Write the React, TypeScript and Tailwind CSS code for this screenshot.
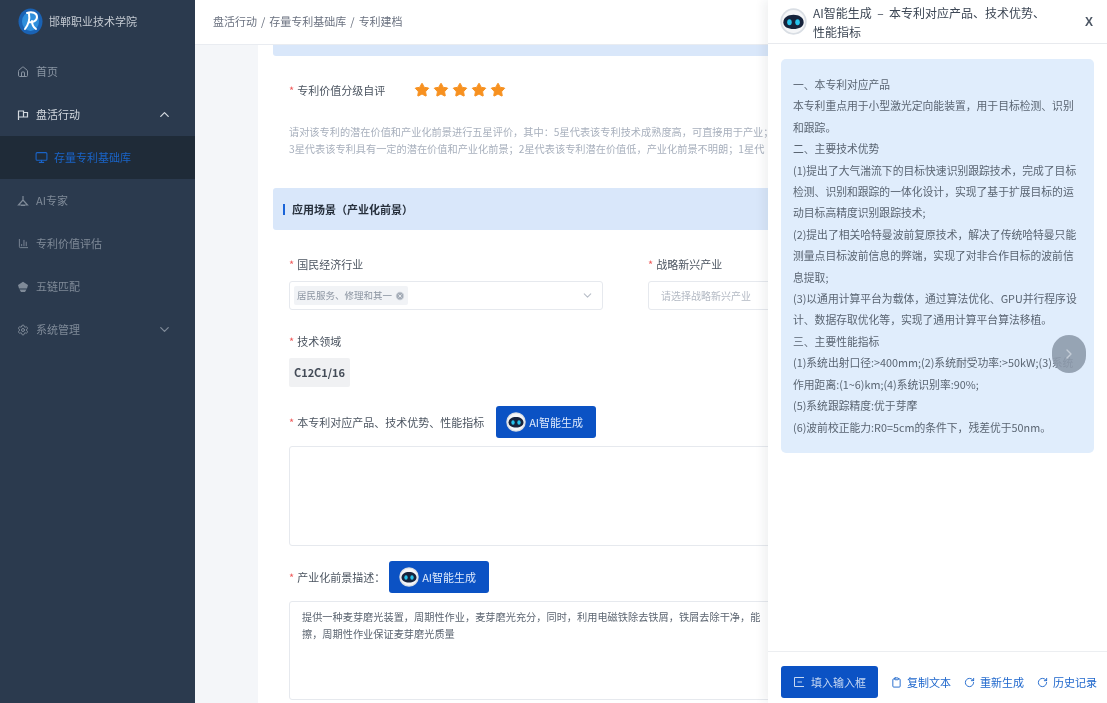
import React from "react";
import { House, ChevronUp, ChevronDown, Monitor, ChartColumn, Settings, RotateCw, Clipboard, ChevronRight, CircleX, Star } from "lucide-react";

const wide = (s: string) => s.replace(/,/g, "\uFF0C").replace(/;/g, "\uFF1B").replace(/:/g, "\uFF1A");
const wideComma = (s: string) => s.replace(/,/g, "\uFF0C");

function Robot({ size }: { size: number }) {
  return (
    <svg width={size} height={size} viewBox="0 0 40 40" className="shrink-0">
      <circle cx="20" cy="20" r="19.5" fill="#d9dee4" />
      <circle cx="20" cy="20" r="17" fill="#f5f6f8" />
      <path d="M5 21c0-7 7-11 15-11s15 4 15 11-7 10-15 10S5 28 5 21z" fill="#16233c" />
      <ellipse cx="14" cy="21" rx="3.400" ry="4.500" fill="#27c3ec" />
      <ellipse cx="26" cy="21" rx="3.400" ry="4.500" fill="#27c3ec" />
    </svg>
  );
}

function Logo() {
  return (
    <svg width="25" height="27" viewBox="0 0 25 27" className="shrink-0">
      <ellipse cx="12.5" cy="13.5" rx="12" ry="13" fill="#1a62b4" />
      <ellipse cx="12.5" cy="13.5" rx="8.500" ry="9.500" fill="#2f8fdc" />
      <path d="M9 5c5-2 10 0 10 4s-5 6-8 5M11 6c1 5-1 11-4 15M14 13c0 3 1 6 4 8" fill="none" stroke="#fff" strokeWidth="2" strokeLinecap="round" />
    </svg>
  );
}

function NavRow({ icon, label, tone, chevron }: { icon: React.ReactNode; label: string; tone: string; chevron?: React.ReactNode }) {
  return (
    <div className={`flex h-[43px] items-center pl-[17px] pr-[23px] text-[11px] ${tone}`}>
      <span className="mr-[7px] flex w-[12px] justify-center">{icon}</span>
      <span className="flex-1">{label}</span>
      {chevron}
    </div>
  );
}

function Req({ children }: { children: React.ReactNode }) {
  return (
    <span className="text-[11px] leading-[16px] text-[#4c5561]">
      <span className="mr-[3px] text-[#ef5b5b]">*</span>
      {children}
    </span>
  );
}

function AiButton() {
  return (
    <div className="flex h-[32px] w-[100px] items-center justify-center gap-[3px] rounded-[3px] bg-[#0b52c4] pr-[3px] text-[11px] text-[#dce8fb]">
      <Robot size={20} />
      <span>AI智能生成</span>
    </div>
  );
}

const panel = [
  "一、本专利对应产品",
  "本专利重点用于小型激光定向能装置,用于目标检测、识别",
  "和跟踪。",
  "二、主要技术优势",
  "(1)提出了大气湍流下的目标快速识别跟踪技术,完成了目标",
  "检测、识别和跟踪的一体化设计,实现了基于扩展目标的运",
  "动目标高精度识别跟踪技术;",
  "(2)提出了相关哈特曼波前复原技术,解决了传统哈特曼只能",
  "测量点目标波前信息的弊端,实现了对非合作目标的波前信",
  "息提取;",
  "(3)以通用计算平台为载体,通过算法优化、GPU并行程序设",
  "计、数据存取优化等,实现了通用计算平台算法移植。",
  "三、主要性能指标",
  "(1)系统出射口径:>400mm;(2)系统耐受功率:>50kW;(3)系统",
  "作用距离:(1~6)km;(4)系统识别率:90%;",
  "(5)系统跟踪精度:优于芽摩",
  "(6)波前校正能力:R0=5cm的条件下,残差优于50nm。",
];

export default function App() {
  return (
    <div className="relative flex h-[703px] w-[1107px] overflow-hidden bg-white blur-[0.7px] font-['Noto_Sans_CJK_SC',sans-serif]">
      <aside className="flex w-[195px] shrink-0 flex-col bg-[#2b3a4e]">
        <div className="flex h-[43px] items-center gap-[6px] pl-[18px] text-[11px] text-[#c3c9d1]">
          <Logo />
          <span>邯郸职业技术学院</span>
        </div>
        <div className="h-[7px]" />
        <NavRow icon={<House size={12} />} label="首页" tone="text-[#8a95a3]" />
        <NavRow
          icon={
            <svg width="12" height="12" viewBox="0 0 12 12" fill="none" stroke="currentColor" strokeWidth="1.200">
              <path d="M1.500 11V2h5v6h-5M6.500 3.500h4v4.500h-4" />
            </svg>
          }
          label="盘活行动"
          tone="text-[#d4d9df]"
          chevron={<ChevronUp size={15} />}
        />
        <div className="flex h-[43px] items-center bg-[#1f2b38] pl-[35px] text-[11px] text-[#1a64c8]">
          <Monitor size={13} className="mr-[6px]" />
          <span>存量专利基础库</span>
        </div>
        <NavRow
          icon={
            <svg width="12" height="12" viewBox="0 0 12 12" fill="none" stroke="currentColor" strokeWidth="1.200">
              <path d="M6 1v4L1.500 10h9L6 5M4 10.500h4" />
            </svg>
          }
          label="AI专家"
          tone="text-[#7f8a98]"
        />
        <NavRow icon={<ChartColumn size={11} />} label="专利价值评估" tone="text-[#7f8a98]" />
        <NavRow
          icon={
            <svg width="12" height="12" viewBox="0 0 12 12" fill="currentColor">
              <path d="M6 .8 11 4l-1 3.500H2L1 4zM2.500 8.500h7L8 11H4z" />
            </svg>
          }
          label="五链匹配"
          tone="text-[#7f8a98]"
        />
        <NavRow icon={<Settings size={12} />} label="系统管理" tone="text-[#7f8a98]" chevron={<ChevronDown size={15} />} />
      </aside>

      <main className="flex min-w-0 flex-1 flex-col">
        <header className="flex h-[45px] shrink-0 items-center gap-[4px] border-b border-[#e9ecf1] bg-white pb-[2px] pl-[18px] text-[11px] text-[#6b7280]">
          <span>盘活行动</span>
          <span>/</span>
          <span>存量专利基础库</span>
          <span>/</span>
          <span>专利建档</span>
        </header>
        <div className="mr-[339px] flex min-h-0 flex-1 overflow-hidden bg-[#f4f6f9] pl-[63px]">
          <div className="w-[860px] shrink-0 bg-white px-[15px]">
            <div className="h-[11px] rounded-b-[3px] bg-[#d9e7fa]" />
            <div className="pl-[16px]">
              <div className="mt-[25px] flex h-[18px] items-center">
                <div className="flex w-[125px]">
                  <Req>专利价值分级自评</Req>
                </div>
                <div className="flex gap-[3px]">
                  {[0, 1, 2, 3, 4].map((i) => (
                    <Star key={i} size={16} fill="#f79120" stroke="#f79120" strokeWidth={1.500} />
                  ))}
                </div>
              </div>
              <div className="mt-[24px] whitespace-nowrap text-[10.200px] leading-[17px] text-[#a8b0bd]">
                <div>{wide("请对该专利的潜在价值和产业化前景进行五星评价,其中:5星代表该专利技术成熟度高,可直接用于产业;")}</div>
                <div>{wide("3星代表该专利具有一定的潜在价值和产业化前景;2星代表该专利潜在价值低,产业化前景不明朗;1星代")}</div>
              </div>
            </div>
            <div className="mt-[31px] flex h-[42px] items-center rounded-[3px] bg-[#d9e7fa] pl-[10px]">
              <span className="mr-[7px] h-[11px] w-[2px] bg-[#1a64d8]" />
              <span className="text-[11px] font-bold text-[#27303c]">{"应用场景\uFF08产业化前景\uFF09"}</span>
            </div>
            <div className="pl-[16px]">
              <div className="mt-[20px] flex gap-[45px]">
                <div className="w-[314px]">
                  <Req>国民经济行业</Req>
                  <div className="mt-[7px] flex h-[29px] items-center justify-between rounded-[3px] border border-[#e6e9ee] pl-[4px] pr-[8px]">
                    <span className="flex h-[19px] items-center gap-[3px] rounded-[2px] bg-[#f1f3f6] px-[3px] text-[9.500px] text-[#8c95a2]">
                      居民服务、修理和其一
                      <CircleX size={10} fill="#a4acb7" stroke="#f1f3f6" />
                    </span>
                    <ChevronDown size={13} className="text-[#b8bec8]" />
                  </div>
                </div>
                <div className="w-[314px]">
                  <Req>战略新兴产业</Req>
                  <div className="mt-[7px] flex h-[29px] items-center rounded-[3px] border border-[#e6e9ee] pl-[12px] text-[10px] text-[#b4bac4]">
                    请选择战略新兴产业
                  </div>
                </div>
              </div>
              <div className="mt-[17px]">
                <Req>技术领域</Req>
              </div>
              <div className="mt-[7px] flex h-[29px] w-[61px] items-center justify-center rounded-[2px] bg-[#f0f1f3] text-[11px] font-semibold text-[#434b57]">
                C12C1/16
              </div>
              <div className="mt-[19px] flex items-center gap-[12px]">
                <Req>本专利对应产品、技术优势、性能指标</Req>
                <AiButton />
              </div>
              <div className="mt-[8px] h-[100px] rounded-[3px] border border-[#e6e9ee]" />
              <div className="mt-[15px] flex items-center gap-[4px]">
                <Req>{wide("产业化前景描述:")}</Req>
                <AiButton />
              </div>
              <div className="mt-[8px] h-[99px] whitespace-nowrap rounded-[3px] border border-[#e6e9ee] px-[12px] pt-[6px] text-[10.200px] leading-[17px] text-[#5d6672]">
                <div>{wide("提供一种麦芽磨光装置,周期性作业,麦芽磨光充分,同时,利用电磁铁除去铁屑,铁屑去除干净,能")}</div>
                <div>{wide("擦,周期性作业保证麦芽磨光质量")}</div>
              </div>
            </div>
          </div>
        </div>
      </main>

      <section className="absolute bottom-0 right-0 top-0 flex w-[339px] flex-col bg-white shadow-[-4px_0_10px_rgba(30,40,60,0.07)]">
        <div className="flex h-[44px] shrink-0 items-center border-b border-[#e8eaee] pl-[12px] pr-[14px]">
          <Robot size={27} />
          <div className="ml-[6px] w-[240px] text-[12px] leading-[19px] text-[#3c4654]">
            {"AI智能生成\u00A0\u00A0–\u00A0\u00A0本专利对应产品、技术优势、性能指标"}
          </div>
          <span className="ml-auto font-['Liberation_Sans',sans-serif] text-[12px] font-bold text-[#4b5563]">X</span>
        </div>
        <div className="relative flex-1 px-[13px] pt-[15px]">
          <div className="rounded-[5px] bg-[#e0edfc] px-[12px] py-[15px] text-[10.800px] leading-[21.400px] text-[#5a6572]">
            {panel.map((l) => (
              <div key={l} className="whitespace-nowrap">
                {wideComma(l)}
              </div>
            ))}
          </div>
          <div className="absolute right-[21px] top-[291px] flex h-[38px] w-[34px] items-center justify-center rounded-full bg-[#8e9bac]/90 text-[#c4ccd6]">
            <ChevronRight size={16} />
          </div>
        </div>
        <div className="flex h-[52px] shrink-0 items-end gap-[13px] border-t border-[#eceef1] pb-[5px] pl-[13px] text-[11px] text-[#1d66cc]">
          <div className="flex h-[32px] w-[97px] items-center justify-center gap-[6px] rounded-[3px] bg-[#0b52c4] text-[#c6d8f3]">
            <svg width="12" height="12" viewBox="0 0 12 12" fill="none" stroke="currentColor" strokeWidth="1">
              <path d="M11 1.500H1.500v9H11M4.500 6H9" />
            </svg>
            填入输入框
          </div>
          <span className="flex h-[32px] items-center gap-[5px]">
            <Clipboard size={11} />
            复制文本
          </span>
          <span className="flex h-[32px] items-center gap-[5px]">
            <RotateCw size={11} />
            重新生成
          </span>
          <span className="flex h-[32px] items-center gap-[5px]">
            <RotateCw size={11} />
            历史记录
          </span>
        </div>
      </section>
    </div>
  );
}
